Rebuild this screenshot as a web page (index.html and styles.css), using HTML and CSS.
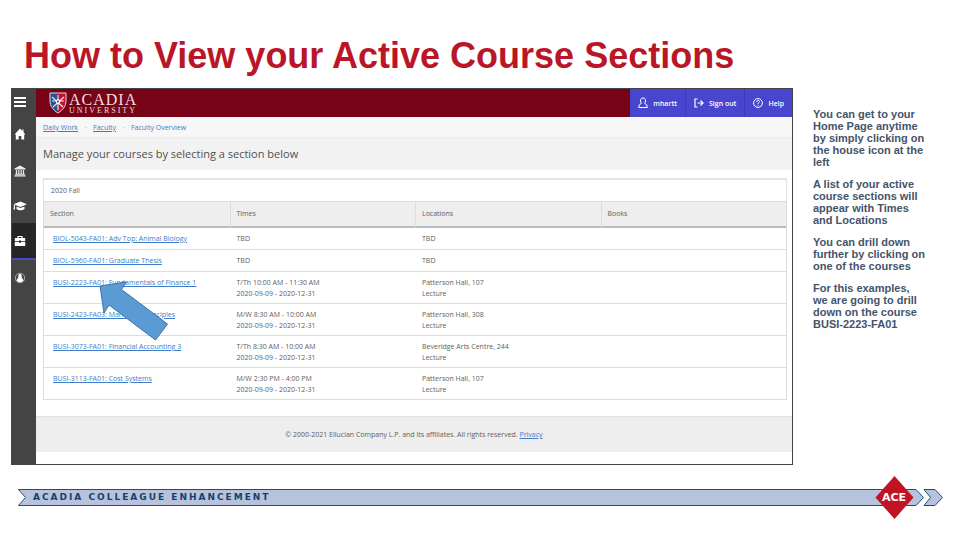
FILE: index.html
```html
<!DOCTYPE html>
<html lang="en">
<head>
  <meta charset="UTF-8" />
  <meta name="viewport" content="width=device-width, initial-scale=1.0"/>
  <title>How to View your Active Course Sections</title>
  <link rel="stylesheet" href="styles.css">
</head>
<body>

  <h1>How to View your Active Course Sections</h1>

  <main>
    <div class="app">
      <nav class="sidebar">
        <button aria-label="Menu">
          <svg width="12" height="12" viewBox="0 0 12 12"><path d="M0 2h12M0 6h12M0 10h12" stroke="#fff" stroke-width="2"/></svg>
        </button>
        <a href="#" aria-label="Home">
          <svg width="12" height="12" viewBox="0 0 12 12"><path d="M6 0.5L0.8 6.2l1 0.6V11.5h2.9V8h2.6v3.5h2.9V6.8l1-0.6L9.5 4.3V1.5H8.3V3z" fill="#fff"/></svg>
        </a>
        <a href="#" aria-label="Finance">
          <svg width="12" height="12" viewBox="0 0 12 12"><path d="M6 0.5L0.5 3.5v1h11v-1zM0.5 10.2h11v1.3h-11zM1.2 8.8h9.6v0.9H1.2z" fill="#eee"/><path d="M2.5 5v4M4.8 5v4M7.2 5v4M9.5 5v4" stroke="#eee" stroke-width="1.2"/></svg>
        </a>
        <a href="#" aria-label="Academics">
          <svg width="14" height="12" viewBox="0 0 14 12"><path d="M7.5 1.5L0.5 4.3l7 2.7 6.3-2.7zM3.5 6.5v2.5c2 1.8 6 1.8 8 0V6.5l-4 1.5zM1 5h1v4.5H0.5z" fill="#fff"/></svg>
        </a>
        <a href="#" class="active" aria-label="Daily Work">
          <svg width="12" height="12" viewBox="0 0 12 12"><path d="M4 3V1.5h4V3" fill="none" stroke="#fff" stroke-width="1.2"/><path d="M0.8 3h10.4v3.3H7V5.5H5v0.8H0.8zM0.8 7H5v0.8h2V7h4.2v4H0.8z" fill="#fff"/></svg>
        </a>
        <a href="#" aria-label="User options">
          <svg width="12" height="12" viewBox="0 0 12 12"><circle cx="6" cy="6" r="4.7" fill="none" stroke="#aaa"/><path d="M6 2c-1.5 0-1.9 1.3-1.6 3 0.1 1-1.7 1.8-1.9 3.5 1.5 2.3 5.5 2.3 7 0-0.2-1.700-2-2.500-1.900-3.500 0.300-1.700-0.100-3-1.600-3z" fill="#fff"/></svg>
        </a>
      </nav>

      <div class="page">
        <header>
          <a href="#" class="logo">
            <svg width="18" height="22" viewBox="0 0 18 22">
              <path d="M1 1h8v20C4 18 1 14 1 9z" fill="#1d5596"/>
              <path d="M9 1h8v8c0 5-3 9-8 12z" fill="#c4122f"/>
              <path d="M1 1h16v8c0 5-3 9-8 12C4 18 1 14 1 9z" fill="none" stroke="#d9dde6"/>
              <path d="M3 5l11 10M15 5L4 15M9 3v15M3 9h12" stroke="#e8e3ea" stroke-width="1.2"/>
              <circle cx="9" cy="9.5" r="2.2" fill="#fff"/><circle cx="9" cy="9.5" r="1" fill="#c4122f"/>
            </svg>
            <span><b>ACADIA</b><small>UNIVERSITY</small></span>
          </a>
          <div class="user-bar">
            <button>
              <svg width="10" height="12" viewBox="0 0 10 12"><path d="M5 1C3 1 2.3 2.3 2.5 4c0.1 1 0.5 1.8 1 2.3L1.3 7.8 0.7 10.5h8.6L8.7 7.8 6.5 6.3c0.5-0.5 0.9-1.3 1-2.3C7.7 2.3 7 1 5 1z" fill="none" stroke="#fff"/></svg>
              mhartt
            </button>
            <button>
              <svg width="10" height="10" viewBox="0 0 10 10"><path d="M3.5 1H1v8h2.5M3.5 5h5.5M6.5 2.5L9 5 6.5 7.5" fill="none" stroke="#fff" stroke-width="1.2"/></svg>
              Sign out
            </button>
            <button>
              <svg width="10" height="10" viewBox="0 0 10 10"><circle cx="5" cy="5" r="4.4" fill="none" stroke="#fff"/><path d="M3.6 4c0-2 2.9-1.9 2.8-0.2C6.4 4.8 5 4.7 5 6M5 6.8v1" fill="none" stroke="#fff"/></svg>
              Help
            </button>
          </div>
        </header>

        <div class="breadcrumb">
          <a href="#">Daily Work</a><i>·</i><a href="#">Faculty</a><i>·</i><span>Faculty Overview</span>
        </div>
        <h2>Manage your courses by selecting a section below</h2>

        <div class="content">
          <table>
            <caption>2020 Fall</caption>
            <thead>
              <tr><th>Section</th><th>Times</th><th>Locations</th><th>Books</th></tr>
            </thead>
            <tbody>
              <tr>
                <td><a href="#">BIOL-5043-FA01: Adv Top: Animal Biology</a></td>
                <td>TBD</td>
                <td>TBD</td>
                <td></td>
              </tr>
              <tr>
                <td><a href="#">BIOL-5960-FA01: Graduate Thesis</a></td>
                <td>TBD</td>
                <td>TBD</td>
                <td></td>
              </tr>
              <tr>
                <td class="target">
                  <a href="#">BUSI-2223-FA01: Fundamentals of Finance 1</a>
                  <svg class="arrow" width="70" height="60" viewBox="0 0 70 60"><path d="M1 5l26.500-4-5 7.500L68.500 43 56.500 59 10 24 5 32z" fill="#5b9bd5" stroke="#41719c"/></svg>
                </td>
                <td>T/Th 10:00 AM - 11:30 AM<br>2020-09-09 - 2020-12-31</td>
                <td>Patterson Hall, 107<br>Lecture</td>
                <td></td>
              </tr>
              <tr>
                <td><a href="#">BUSI-2423-FA03: Marketing Principles</a></td>
                <td>M/W 8:30 AM - 10:00 AM<br>2020-09-09 - 2020-12-31</td>
                <td>Patterson Hall, 308<br>Lecture</td>
                <td></td>
              </tr>
              <tr>
                <td><a href="#">BUSI-3073-FA01: Financial Accounting 3</a></td>
                <td>T/Th 8:30 AM - 10:00 AM<br>2020-09-09 - 2020-12-31</td>
                <td>Beveridge Arts Centre, 244<br>Lecture</td>
                <td></td>
              </tr>
              <tr>
                <td><a href="#">BUSI-3113-FA01: Cost Systems</a></td>
                <td>M/W 2:30 PM - 4:00 PM<br>2020-09-09 - 2020-12-31</td>
                <td>Patterson Hall, 107<br>Lecture</td>
                <td></td>
              </tr>
            </tbody>
          </table>
        </div>

        <div class="copyright">
          © 2000-2021 Ellucian Company L.P. and its affiliates. All rights reserved. <a href="#">Privacy</a>
        </div>
      </div>
    </div>

    <aside>
      <p>You can get to your Home Page anytime by simply clicking on the house icon at the left</p>
      <p>A list of your active course sections will appear with Times and Locations</p>
      <p>You can drill down further by clicking on one of the courses</p>
      <p>For this examples, we are going to drill down on the course BUSI-2223-FA01</p>
    </aside>
  </main>

  <footer>
    <svg width="8" height="17" viewBox="0 0 8 17"><path d="M8 0.5H0.5L7.5 8.5 0.5 16.5H8z" fill="#b7c3dc"/><path d="M8 0.5H0.5L7.5 8.5 0.5 16.5H8" fill="none" stroke="#1f4e79"/></svg>
    <div class="banner">ACADIA COLLEAGUE ENHANCEMENT</div>
    <svg width="74" height="43" viewBox="0 0 74 43">
      <path d="M0 13.5H47L54.5 21.5 47 29.5H0z" fill="#b7c3dc"/>
      <path d="M0 13.5H47L54.5 21.5 47 29.5H0" fill="none" stroke="#1f4e79"/>
      <path d="M55 13.5H66L73.5 21.5 66 29.5H55L61.5 21.5z" fill="#b7c3dc" stroke="#1f4e79"/>
      <path d="M25.5 0L44.5 21.5 25.5 43 6.5 21.5z" fill="#c01425"/>
      <text x="25" y="25">ACE</text>
    </svg>
  </footer>

</body>
</html>
```

FILE: styles.css
```css
* {
  box-sizing: border-box;
}
body {
  font-family: "Liberation Sans", Arial, sans-serif;
  background: #fff;
  margin: 0;
}
h1 {
  margin: 0;
  padding: 36px 24px 12px;
  font-size: 36px;
  line-height: 40px;
  color: #bb1628;
}
main {
  display: flex;
  align-items: flex-start;
  gap: 20px;
  padding: 0 34px 0 11px;
}
button {
  font: inherit;
  color: inherit;
  background: none;
  border: 0;
  padding: 0;
}
a {
  color: #3d7cc9;
}

/* app window */
.app {
  flex: 1;
  display: flex;
  border: 1px solid #444;
  font-family: "Open Sans", "Noto Sans", sans-serif;
  font-size: 7px;
  line-height: 11px;
  color: #606060;
}
.sidebar {
  width: 24px;
  background: #444;
}
.sidebar a,
.sidebar button {
  display: flex;
  align-items: center;
  justify-content: center;
  width: 100%;
  height: 35px;
  padding-right: 8px;
}
.sidebar button {
  height: 26px;
}
.sidebar .active {
  height: 37px;
  background: #262626;
  border-bottom: 2px solid #4b48c8;
}
.sidebar button + a {
  height: 38px;
}
.page {
  flex: 1;
  padding-bottom: 12px;
}
header {
  display: flex;
  justify-content: space-between;
  height: 28px;
  background: #780316;
}
.logo {
  display: flex;
  align-items: center;
  gap: 2px;
  padding-left: 13px;
  color: #f0dfe2;
  font-family: "Liberation Serif", serif;
  text-decoration: none;
}
.logo b,
.logo small {
  display: block;
  font-weight: normal;
}
.logo b {
  font-size: 16px;
  line-height: 15px;
  letter-spacing: 1px;
}
.logo small {
  font-size: 8px;
  line-height: 8px;
  letter-spacing: 2px;
}
.user-bar {
  display: flex;
  background: #4846ce;
  color: #fff;
  font-weight: 600;
}
.user-bar button {
  display: flex;
  align-items: center;
  gap: 5px;
  padding: 0 8px;
}
.user-bar button + button {
  border-left: 1px solid #3d3bb4;
}
.breadcrumb {
  display: flex;
  height: 21px;
  padding: 5px 7px;
  background: #f7f7f7;
  border-bottom: 1px solid #eee;
  color: #3d7cc9;
}
.breadcrumb i {
  width: 15px;
  text-align: center;
  color: #999;
}
h2 {
  margin: 0;
  padding: 8px 7px;
  background: #f2f2f2;
  font-size: 11px;
  font-weight: normal;
  line-height: 16px;
  color: #505050;
}
.content {
  padding: 8px 5px 16px 7px;
}
table {
  width: 100%;
  table-layout: fixed;
  border: 1px solid #ddd;
  border-top: 0;
  border-spacing: 0;
}
caption {
  padding: 5px 7px;
  border: 1px solid #e4e4e4;
  border-top-width: 2px;
  border-bottom: 0;
  text-align: left;
}
th {
  padding: 6px 6px 7px;
  background: #eee;
  border-top: 1px solid #ddd;
  border-bottom: 2px solid #bbb;
  font-weight: normal;
  text-align: left;
}
th + th {
  border-left: 1px solid #ddd;
}
td {
  height: 22px;
  padding: 5px 7px 4px;
  border-bottom: 1px solid #ddd;
  vertical-align: top;
}
td:first-child {
  padding-left: 9px;
}
tr:last-child td {
  border-bottom: 0;
}
.target {
  position: relative;
}
.arrow {
  position: absolute;
  left: 55px;
  top: 9px;
}
.copyright {
  padding: 12px;
  background: #eee;
  border-top: 1px solid #e2e2e2;
  text-align: center;
}

/* notes */
aside {
  width: 113px;
  padding-top: 20px;
  font-size: 11px;
  font-weight: bold;
  line-height: 12px;
  color: #44546a;
}
aside p {
  margin: 0 0 10px;
}

footer {
  display: flex;
  align-items: center;
  padding: 11px 17px 0 18px;
}
.banner {
  flex: 1;
  height: 17px;
  padding-left: 7px;
  background: #b7c3dc;
  border: solid #1f4e79;
  border-width: 1px 0;
  color: #173f6d;
  font-family: "DejaVu Sans", sans-serif;
  font-size: 9px;
  font-weight: bold;
  line-height: 15px;
  letter-spacing: 2px;
}
footer text {
  fill: #fff;
  font-family: "DejaVu Sans", sans-serif;
  font-size: 11px;
  font-weight: bold;
  text-anchor: middle;
}
```
